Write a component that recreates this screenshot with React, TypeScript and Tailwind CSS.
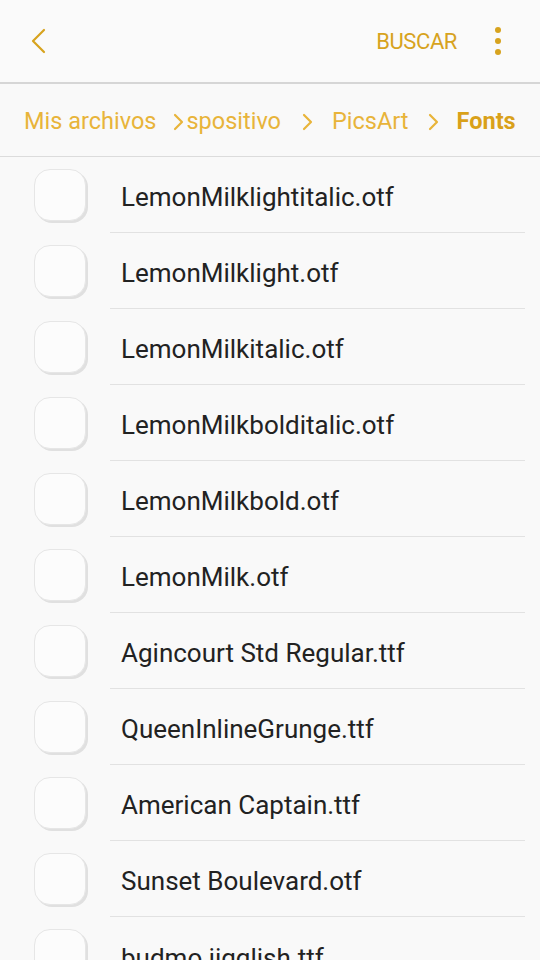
import React from "react";

const files = [
  "LemonMilklightitalic.otf",
  "LemonMilklight.otf",
  "LemonMilkitalic.otf",
  "LemonMilkbolditalic.otf",
  "LemonMilkbold.otf",
  "LemonMilk.otf",
  "Agincourt Std Regular.ttf",
  "QueenInlineGrunge.ttf",
  "American Captain.ttf",
  "Sunset Boulevard.otf",
  "budmo jigglish.ttf",
];

function Chevron({ className }: { className?: string }) {
  return (
    <svg viewBox="0 0 12 20" className={className} fill="none" stroke="currentColor" strokeWidth={2.2} strokeLinecap="round" strokeLinejoin="round">
      <path d="M3 3l7 7-7 7" />
    </svg>
  );
}

function CheckBox() {
  return (
    <div className="w-[52px] h-[52px] rounded-[16px] bg-[#fcfcfc] border border-[#e6e6e6] shadow-[2px_2px_0_0_#e0e0e0]" />
  );
}

export default function App() {
  return (
    <div className="w-[540px] h-[960px] overflow-hidden bg-[#f9f9f9] font-['Roboto',sans-serif]">
      <header className="h-[84px] flex items-center border-b-2 border-[#d6d6d6] bg-[#fafafa]">
        <button type="button" className="ml-[29px] text-[#d7a31e]">
          <svg viewBox="0 0 18 26" className="w-[18px] h-[26px]" fill="none" stroke="currentColor" strokeWidth={2.2} strokeLinecap="round" strokeLinejoin="round">
            <path d="M15 2L4 13l11 11" />
          </svg>
        </button>
        <span className="ml-auto text-[22px] text-[#d7a31e] tracking-[-0.4px]">BUSCAR</span>
        <div className="ml-[38px] mr-[39px] flex flex-col gap-[5px]">
          <span className="w-[6px] h-[6px] rounded-full bg-[#d7a31e]" />
          <span className="w-[6px] h-[6px] rounded-full bg-[#d7a31e]" />
          <span className="w-[6px] h-[6px] rounded-full bg-[#d7a31e]" />
        </div>
      </header>
      <nav className="h-[73px] flex items-center pt-[3px] pl-[24px] border-b border-[#dcdcdc] text-[23.5px] text-[#e8b43a]">
        <span>Mis archivos</span>
        <Chevron className="w-[12px] h-[20px] ml-[16px] mr-[2px]" />
        <span>spositivo</span>
        <Chevron className="w-[12px] h-[20px] ml-[20px] mr-[19px]" />
        <span>PicsArt</span>
        <Chevron className="w-[12px] h-[20px] ml-[18px] mr-[18px]" />
        <span className="font-bold text-[#d9a11a]">Fonts</span>
      </nav>
      <ul>
        {files.map((f, i) => (
          <li key={f} className="h-[76px] flex items-center">
            <div className="w-[110px] pl-[34px] flex items-center">
              <CheckBox />
            </div>
            <div className={`flex-1 mr-[15px] h-full flex items-center pt-[6px] pl-[11px] ${i < files.length - 1 ? "border-b border-[#e2e2e2]" : ""}`}>
              <span className="text-[26px] text-[#222]">{f}</span>
            </div>
          </li>
        ))}
      </ul>
    </div>
  );
}
